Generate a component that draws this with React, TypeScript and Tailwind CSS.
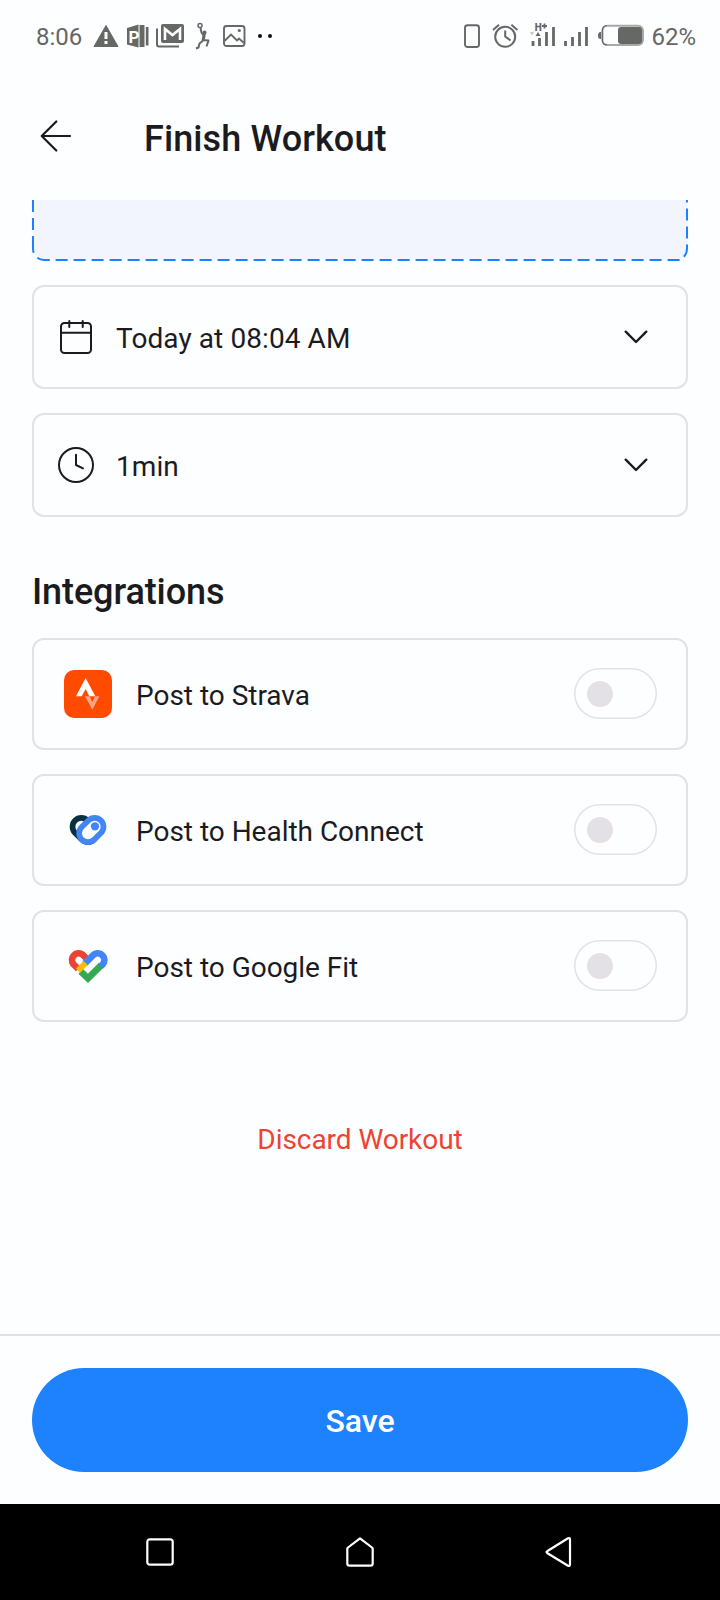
import type { ReactNode } from "react";

function Ic({ w, h = 40, className = "", children }: { w: number; h?: number; className?: string; children: ReactNode }) {
  return (
    <svg width={w} height={h} viewBox={`0 0 ${w} ${h}`} fill="none" className={`shrink-0 ${className}`}>
      {children}
    </svg>
  );
}

function StatusBar() {
  return (
    <div className="flex h-[72px] items-center justify-between pr-6 pl-9 text-[24px] text-[#666666]">
      <div className="flex items-center">
        <span className="w-[57px] pt-px leading-10">8:06</span>
        <Ic w={26}>
          <path d="M13 9.5 25 30.5H1Z" fill="#666866" stroke="#666866" strokeLinejoin="round" />
          <path d="M13 16v7M13 25v3" stroke="#fff" strokeWidth="3" />
        </Ic>
        <Ic w={24} className="ml-[7px]">
          <path d="M1 12 12.500 8.500V31.500L1 28.500Z" fill="#666866" />
          <path d="M13.500 9H18.500V31H13.500Z" fill="#666866" />
          <path d="M19.800 11H22.500V29.500H19.800Z" fill="#666866" />
          <text x="2.500" y="26.500" fontSize="17" fontWeight="700" fill="#fff">P</text>
        </Ic>
        <Ic w={28} className="ml-[6px]">
          <path d="M1 12.500V28.500q0 2 2 2H23" stroke="#666866" strokeWidth="2" />
          <rect x="5" y="8" width="23" height="19" rx="2" fill="#666866" />
          <path d="M9 24V13L16.500 19 24 13V24" stroke="#fff" strokeWidth="2.600" />
        </Ic>
        <Ic w={16} className="ml-[11px]">
          <circle cx="5" cy="9.500" r="2" stroke="#666866" strokeWidth="1.500" />
          <circle cx="9.500" cy="16.500" r="2" fill="#666866" />
          <path d="M5.500 12 6.500 16.500 8.500 19.500 7.500 25 4.500 27.500 3.500 31.500 1 32.500M7.500 24 13.500 24.500 11.500 30.500M9.800 18 9 23" stroke="#666866" strokeWidth="2" strokeLinejoin="round" />
        </Ic>
        <Ic w={23} className="ml-3">
          <rect x="1" y="10" width="20.500" height="20" rx="2.500" stroke="#666866" strokeWidth="1.900" />
          <path d="M1.500 25 8 18.500 14 24.500 16 22.500 21 27" stroke="#666866" strokeWidth="1.800" />
          <circle cx="16.300" cy="14.500" r="1.600" fill="#666866" />
        </Ic>
        <Ic w={16} className="ml-3">
          <circle cx="2" cy="20" r="2" fill="#111" />
          <circle cx="12" cy="20" r="2" fill="#111" />
        </Ic>
      </div>
      <div className="flex items-center">
        <Ic w={16}>
          <rect x="1" y="9.200" width="14" height="21.800" rx="2.500" stroke="#666866" strokeWidth="1.900" />
        </Ic>
        <Ic w={27} className="ml-3">
          <circle cx="13.200" cy="20.800" r="10" stroke="#666866" strokeWidth="2" />
          <path d="M1 14 7 8.800M25.400 14 19.400 8.800M13.200 14.500V20.500L18.500 24.500" stroke="#666866" strokeWidth="2" />
        </Ic>
        <Ic w={26} className="ml-[11px]">
          <path d="M0 16H4L2 19.500Z" fill="#c4c4c4" />
          <path d="M5.500 20 8 16 10.500 20Z" fill="#666866" />
          <path d="M3 25V30M9.500 22V30M16.500 16V30M23.500 11V30" stroke="#666866" strokeWidth="2.800" />
          <text x="4.800" y="14.800" fontSize="10" fontWeight="900" fill="#666866">H</text>
          <path d="M12 10H17M14.500 7.500V12.500" stroke="#666866" strokeWidth="1.800" />
        </Ic>
        <Ic w={25} className="ml-2">
          <path d="M1.500 25V30M8.500 21V30M15.500 16V30M22.500 11V30" stroke="#666866" strokeWidth="2.800" />
        </Ic>
        <Ic w={46} className="ml-[9px]">
          <path d="M3 16H2.500Q0 16 0 19.500T2.500 23H3Z" fill="#666866" />
          <rect x="4.500" y="9.700" width="40.500" height="19.300" rx="5" stroke="#a8a8a8" strokeWidth="2" />
          <path d="M9 9.500Q4.300 9.500 4.300 15V24Q4.300 29 9 29" stroke="#666866" strokeWidth="1.200" />
          <rect x="20" y="11" width="24" height="17" rx="3" fill="#666866" />
        </Ic>
        <span className="ml-[7px] pt-px leading-10">62%</span>
      </div>
    </div>
  );
}

function SelectRow({ icon, label }: { icon: ReactNode; label: string }) {
  return (
    <button className="flex h-[104px] w-full items-center rounded-xl border-2 border-[#e4e1e6] pr-[34px] pl-[22px] text-left">
      {icon}
      <span className="mt-[3px] ml-5 flex-1 text-[28px] tracking-[0.08px]">{label}</span>
      <Ic w={32} h={32}>
        <path d="M5.700 10.700 16 21 26.300 10.700" stroke="#1b1b1f" strokeWidth="2.400" strokeLinecap="round" strokeLinejoin="round" />
      </Ic>
    </button>
  );
}

function IntegrationRow({ icon, label }: { icon: ReactNode; label: string }) {
  return (
    <div className="flex h-28 items-center rounded-xl border-2 border-[#e4e1e6] pr-[29px] pl-[30px]">
      {icon}
      <span className="mt-[3px] ml-6 flex-1 text-[28px] tracking-[-0.02px]">{label}</span>
      <button role="switch" aria-checked="false" className="-mt-px flex h-[51px] w-[83px] items-center rounded-full pt-px pl-[12.500px] inset-ring-[1.500px] inset-ring-[#e4e1e6]">
        <span className="size-[26px] rounded-full bg-[#e4e1e6]" />
      </button>
    </div>
  );
}

const calendarIcon = (
  <Ic w={40} h={40}>
    <rect x="5" y="6" width="30" height="30" rx="3.500" stroke="#1b1b1f" strokeWidth="2" />
    <path d="M5 15.700H35M13.300 4V10M26.700 4V10" stroke="#1b1b1f" strokeWidth="2" strokeLinecap="round" />
  </Ic>
);

const clockIcon = (
  <Ic w={40} h={40}>
    <circle cx="20" cy="20" r="17" stroke="#1b1b1f" strokeWidth="2" />
    <path d="M20 9.800V20L27 23.300" stroke="#1b1b1f" strokeWidth="2" strokeLinecap="round" strokeLinejoin="round" />
  </Ic>
);

const stravaIcon = (
  <svg width="48" height="48" viewBox="0 0 144 144" className="shrink-0">
    <rect width="144" height="144" rx="30" fill="#ff4b00" />
    <path d="M65 24 94 79H76L65 57 53 79H36Z" fill="#fff" />
    <path d="M63 79H77L85 97 93 79H106L85 119Z" fill="#ffa587" />
  </svg>
);

const healthConnectIcon = (
  <svg width="48" height="48" viewBox="0 0 144 144" className="shrink-0" strokeLinecap="round">
    <path d="M52 62 72 82" stroke="#073042" strokeWidth="70" />
    <path d="M52 62 72 82" stroke="#fff" strokeWidth="36" />
    <path d="M92 62 72 82" stroke="#4285f4" strokeWidth="70" />
    <path d="M92 62 72 82" stroke="#fff" strokeWidth="36" />
    <circle cx="93" cy="61" r="12.500" fill="#4285f4" />
  </svg>
);

const googleFitIcon = (
  <svg width="48" height="48" viewBox="0 0 144 144" className="shrink-0" fill="none" strokeWidth="20">
    <path d="M50 88 72 109 111 70" stroke="#34a853" />
    <path d="M43 81 28 66A20 20 0 0 1 56 38L72 54" stroke="#ea4335" />
    <path d="M62 65 89 38A20 20 0 0 1 117 66L110 73" stroke="#4285f4" />
    <path d="M42 86 65 63" stroke="#fbbc04" strokeWidth="18" />
  </svg>
);

export default function App() {
  return (
    <div className="flex h-[1600px] w-[720px] flex-col overflow-hidden bg-[#fdfeff] font-[Roboto,sans-serif] text-[#1b1b1f]">
      <StatusBar />
      <header className="flex h-32 items-center pl-9">
        <Ic w={40} h={40}>
          <path d="M34 20H5.700M20.300 5.500 5.700 20 20.300 34.500" stroke="#1b1b1f" strokeWidth="2.200" strokeLinecap="round" strokeLinejoin="round" />
        </Ic>
        <h1 className="mt-[5px] ml-[68px] text-[36px] font-medium tracking-[0.1px]">Finish Workout</h1>
      </header>

      <main className="flex flex-1 flex-col px-8">
        <div className="relative h-[61px] px-px pb-px">
          <div className="h-full rounded-b-xl bg-[#f2f5fd]" />
          <svg className="absolute top-0 left-0" width="656" height="61" fill="none" stroke="#1e82ff" strokeWidth="2">
            <path d="M1 0V49A11 11 0 0 0 12 60H18" strokeDasharray="12 6 12 6 17 6 13 100" />
            <path d="M23.600 60H648" strokeDasharray="12 6" />
            <path d="M655 0V49A11 11 0 0 1 644 60" strokeDasharray="2.500 6 12 6 12 6 13 100" />
          </svg>
        </div>
        <div className="mt-6 flex flex-col gap-6">
          <SelectRow icon={calendarIcon} label="Today at 08:04 AM" />
          <SelectRow icon={clockIcon} label="1min" />
        </div>

        <h2 className="mt-[51px] text-[36px] leading-[48px] font-medium tracking-[-0.1px]">Integrations</h2>
        <div className="mt-[22px] flex flex-col gap-6">
          <IntegrationRow icon={stravaIcon} label="Post to Strava" />
          <IntegrationRow icon={healthConnectIcon} label="Post to Health Connect" />
          <IntegrationRow icon={googleFitIcon} label="Post to Google Fit" />
        </div>

        <button className="mt-[98px] self-center text-[28px] leading-10 tracking-[-0.05px] text-[#f0432f]">Discard Workout</button>
      </main>

      <footer className="border-t-2 border-[#e0e0e4] px-8 py-8">
        <button className="h-[104px] w-full rounded-full bg-[#1e82ff] pt-px text-[32px] font-medium text-white">Save</button>
      </footer>

      <nav className="flex h-24 items-center justify-center gap-[160px] bg-black">
        <Ic w={40} h={40}>
          <rect x="7.300" y="7.300" width="25.400" height="25.400" rx="2.500" stroke="#fff" strokeWidth="2.200" />
        </Ic>
        <Ic w={40} h={40}>
          <path d="M20 6.300 32 15.500Q32.700 16.200 32.700 17V31.500Q32.700 33.700 30.500 33.700H9.500Q7.300 33.700 7.300 31.500V17Q7.300 16.200 8 15.500Z" stroke="#fff" strokeWidth="2.200" strokeLinejoin="round" />
        </Ic>
        <Ic w={40} h={40}>
          <path d="M7.500 19Q5.500 20 7.500 21.200L28 33.700Q30 34.500 30 32.500V7.500Q30 5.500 28 6.300Z" stroke="#fff" strokeWidth="2.200" strokeLinejoin="round" />
        </Ic>
      </nav>
    </div>
  );
}
